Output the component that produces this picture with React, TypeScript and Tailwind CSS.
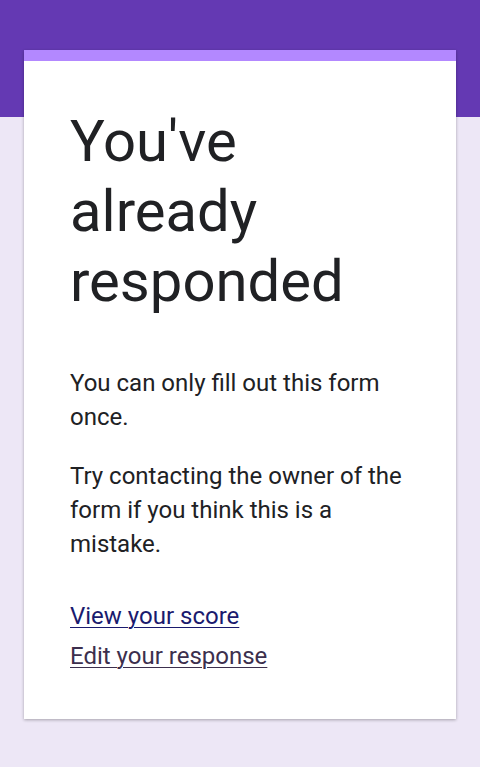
export default function App() {
  return (
    <div className="min-h-screen bg-[#ede7f6] pb-12" style={{ fontFamily: 'Roboto, "Noto Sans", sans-serif' }}>
      {/* Header band */}
      <div className="h-[117px] bg-[#6439b3]" />

      {/* Card */}
      <div className="relative mx-6 -mt-[67px] bg-white border-t-[11px] border-[#b388ff] shadow-[0_1px_3px_rgba(0,0,0,0.3)]">
        <div className="px-[46px] pt-[45px] pb-[46px]">
          <h1 className="text-[58px] leading-[70px] font-normal text-[#202124]">
            You've already responded
          </h1>

          <div className="mt-[50px] text-[24px] leading-[34px] text-[#202124]">
            <p>You can only fill out this form once.</p>
            <p className="mt-[25px]">Try contacting the owner of the form if you think this is a mistake.</p>
          </div>

          <div className="mt-[38px] flex flex-col gap-[6px] text-[24px] leading-[34px]">
            <a href="#" className="text-[#1a1a6e] underline underline-offset-[3px] decoration-1 self-start">View your score</a>
            <a href="#" className="text-[#3c2f4d] underline underline-offset-[3px] decoration-1 self-start">Edit your response</a>
          </div>
        </div>
      </div>
    </div>
  );
}
